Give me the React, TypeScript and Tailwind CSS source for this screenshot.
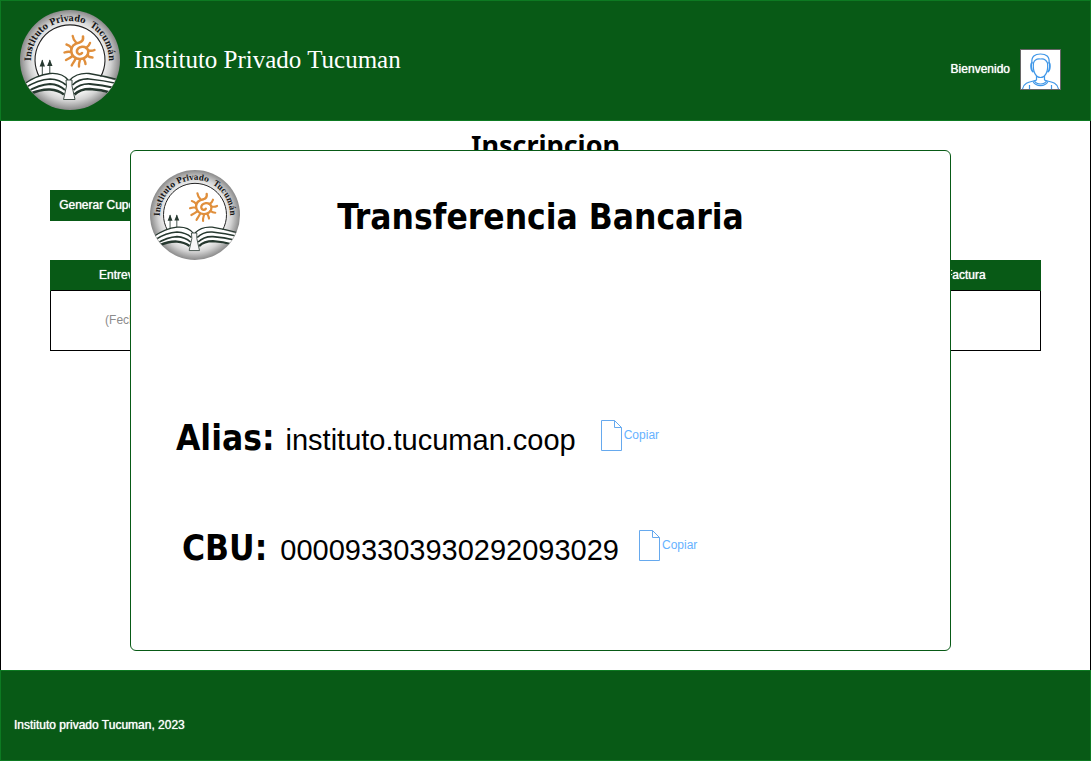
import { useId } from "react";

function Logo({ className }: { className: string }) {
  const id = useId();
  return (
    <svg viewBox="0 0 100 100" className={className} role="img" aria-label="Instituto Privado Tucumán">
      <defs>
        <radialGradient id={`${id}g`} cx="50%" cy="50%" r="50%">
          <stop offset="0.66" stopColor="#f8f8f8" />
          <stop offset="0.82" stopColor="#d2d2d2" />
          <stop offset="1" stopColor="#8a8a8a" />
        </radialGradient>
        <clipPath id={`${id}c`}>
          <circle cx="50" cy="50" r="49.5" />
        </clipPath>
        <path id={`${id}t`} d="M11 50 A39 39 0 0 1 89 50" />
      </defs>
      <circle cx="50" cy="50" r="50" fill={`url(#${id}g)`} />
      <path d="M20 68 A35 35 0 1 1 80 68 Z" fill="#fff" />
      <path d="M19.5 67 A35 35 0 1 1 80.5 67" fill="none" stroke="#222" strokeWidth="1.1" />
      <text className="font-['DejaVu_Serif_Condensed','DejaVu_Serif',serif] text-[9px] font-bold" fill="#151515">
        <textPath href={`#${id}t`} startOffset="50%" textAnchor="middle">
          Instituto Privado{"\u00a0"} Tucumán
        </textPath>
      </text>
      <g stroke="#e08f3c" fill="none" strokeLinecap="round" strokeLinejoin="round">
        <path d="M63 26.500 C63.500 29.500 62.500 31.500 59.500 32.500 C54 33.500 51 37 51.200 41 C51.500 45.500 55 49 60 49 C65 49 68.500 45.500 68.300 41.500 C68 38 65 36.500 62 36.800 C58.500 37.200 56.500 39.500 57 42 C57.500 44.500 60.500 45 62 43" strokeWidth="2.600" />
        <path d="M52.700 26 C53 29 54.500 31 56.500 33 M46.500 34.500 C48.500 35 50 36 51.500 38 M44.500 42.500 C47 41.500 49 41.500 51 42 M46 50 C48 49 50 48 52.500 46 M51.700 55.500 C52.500 53.500 54 52 55.500 49 M59 56.500 C58.500 54 59.500 52 60 50 M65.500 54 C65.500 52 64.500 50.500 63.500 48.500 M72.500 47.500 C71 47.500 69 47 67 45.500 M74.500 40 C72.500 41 70.500 41 68.500 40.500 M70 33 C69.500 35 68 36.500 66 38" strokeWidth="2.400" />
      </g>
      <g stroke="#26382f" strokeWidth="0.9" fill="#26382f">
        <path d="M22.300 50 V65 M29.800 50 V64" />
        <path d="M22.300 49.500 L25 56.500 H19.600 Z M29.800 49.500 L32.500 56 H27.100 Z" strokeWidth="0" />
      </g>
      <g clipPath={`url(#${id}c)`}>
        <path d="M5 74 Q16 66 29 63.500 Q42 62 49 70 Q56 62 69 64 Q84 67 97 71 L89 84 Q68 75 54 86 L55 90 H43 L44 86 Q30 76 11 82 Z" fill="#fff" />
        <g fill="none" stroke="#26382f">
          <path d="M4 74 Q17 65 30 63.500 Q42 62.500 48 70 M50 70 Q57 62.500 69 63.500 Q84 66 99 70" strokeWidth="1.300" />
          <path d="M5 78 Q18 69.500 30 69 Q40 69.500 46 75 M52.500 75 Q59 68.500 69 69 Q84 70.500 97 73.500" strokeWidth="1.700" />
          <path d="M7 82 Q19 74.500 30 74 Q39 74.500 45 80 M53.500 80 Q60 73.500 70 74 Q82 75 95 78" strokeWidth="1.800" />
          <path d="M10 84 Q21 79 30 79.500 Q38 80 44 84.500 M54.500 84.500 Q60 79 70 79 Q81 79.500 92 83" strokeWidth="2.600" />
        </g>
        <path d="M46 70 H52 V76 L55 89.500 H43.500 L46.500 76 Z" fill="#f7f7f7" stroke="#26382f" strokeWidth="0.900" />
      </g>
    </svg>
  );
}

function Avatar() {
  return (
    <svg viewBox="0 0 41 41" className="size-[41px]" role="img" aria-label="Usuario">
      <rect x="0.5" y="0.5" width="40" height="40" fill="#fff" stroke="#666" />
      <g fill="none" stroke="#3f97e8" strokeWidth="1.200">
        <path d="M13.500 14 C12.500 23 16 28.500 20.500 28.500 C25 28.500 28.500 23 27.500 14 C26 10.500 23 9.500 20.500 10 C17 9.500 14.500 11 13.500 14 Z" />
        <path d="M12 14 C11 7.500 15 5 20.500 5 C26 5 30 7.500 29 14" />
        <path d="M12.500 13.500 C10.500 14 10.500 21 13.500 23 M28.500 13.500 C30.500 14 30.500 21 27.500 23" strokeWidth="1.800" />
        <path d="M16.500 27 V31 C13 33 4 32 2.500 40 M24.500 27 V31 C28 33 37 32 38.500 40" />
        <path d="M14.500 32 C17 36 24 36 26.500 32 M13 32.500 C16 38 25 38 28 32.500 M9.500 36 V40 M31.500 36 V40" />
      </g>
    </svg>
  );
}

function CopyButton({ label }: { label: string }) {
  return (
    <button type="button" aria-label={`Copiar ${label}`} className="flex cursor-pointer items-center gap-px pb-1 text-xs leading-4 text-[#66b2ff]">
      <svg viewBox="0 0 22 32" className="h-8 w-[22px]" fill="#fff" stroke="#66a9ee" aria-hidden="true">
        <path d="M0.5 0.5 H13.500 L20.500 7.500 V30.500 H0.5 Z M13.500 0.5 V7.500 H20.500" />
      </svg>
      <span className="pb-0.5">Copiar</span>
    </button>
  );
}

export default function App() {
  return (
    <div className="relative flex min-h-screen flex-col bg-white font-['Liberation_Sans',Arial,sans-serif] text-xs text-black">
      <header className="flex h-[121px] items-center justify-between border border-[#0d7a22] bg-[#085a16] pr-[29px] pb-0.5 pl-[19px] text-white">
        <div className="flex items-center gap-[14px]">
          <Logo className="size-[100px]" />
          <span className="font-['Liberation_Serif',serif] text-[25px] leading-8">Instituto Privado Tucuman</span>
        </div>
        <div className="flex items-center gap-[10px] pt-5">
          <span className="pb-0.5 [text-shadow:0_0_1px_#fff]">Bienvenido</span>
          <Avatar />
        </div>
      </header>

      <main className="flex-1 border-x border-black px-[49px] pt-1">
        <h1 className="text-center font-['Noto_Sans','DejaVu_Sans',sans-serif] text-[27px] leading-10 font-bold">Inscripcion</h1>
        <button type="button" className="mt-[25px] h-[31px] w-[101px] bg-[#085a16] pb-0.5 whitespace-nowrap text-white [text-shadow:0_0_1px_#fff]">
          Generar Cupon
        </button>
        <table className="mt-[39px] w-full table-fixed border-collapse">
          <colgroup>
            <col className="w-[150px]" />
            <col />
            <col className="w-[150px]" />
          </colgroup>
          <thead>
            <tr className="h-[30px] border-x border-[#085a16] bg-[#085a16] text-white [text-shadow:0_0_1px_#fff]">
              <th className="font-normal">Entrevista</th>
              <td />
              <th className="font-normal">Factura</th>
            </tr>
          </thead>
          <tbody>
            <tr className="h-[60px] border border-black text-center text-[#8c8c8c]">
              <td>(Fecha)</td>
              <td />
              <td />
            </tr>
          </tbody>
        </table>
      </main>

      <footer className="flex h-[91px] items-center border border-[#0d7a22] bg-[#085a16] px-[13px] pt-[18px] text-white">
        <p className="[text-shadow:0_0_1px_#fff]">Instituto privado Tucuman, 2023</p>
      </footer>

      <div className="absolute inset-0 pt-[150px] pr-[140px] pl-[130px]">
        <section role="dialog" aria-labelledby="dialog-title" className="min-h-[501px] rounded-md border border-[#085a16] bg-white px-[19px] pt-[19px]">
          <div className="grid grid-cols-[90px_1fr_90px] items-center">
            <Logo className="size-[90px]" />
            <h2 id="dialog-title" className="pt-1 text-center font-['DejaVu_Sans_Condensed','DejaVu_Sans',sans-serif] text-[35px] leading-[86px] font-bold">Transferencia Bancaria</h2>
          </div>
          <dl className="mt-[153px] flex flex-col gap-[60px] pl-[26px] leading-[50px]">
            <div className="flex items-center">
              <dt className="font-['DejaVu_Sans_Condensed','DejaVu_Sans',sans-serif] text-[35px] font-bold">Alias:</dt>
              <dd className="flex items-center gap-[25px] pl-[11px] text-[29px]">
                <span className="pt-1 leading-[46px]">instituto.tucuman.coop</span>
                <CopyButton label="alias" />
              </dd>
            </div>
            <div className="flex items-center pl-1.5">
              <dt className="font-['DejaVu_Sans_Condensed','DejaVu_Sans',sans-serif] text-[35px] font-bold">CBU:</dt>
              <dd className="flex items-center gap-5 pl-[13px] text-[29px]">
                <span className="pt-1 leading-[46px]">000093303930292093029</span>
                <CopyButton label="CBU" />
              </dd>
            </div>
          </dl>
        </section>
      </div>
    </div>
  );
}
